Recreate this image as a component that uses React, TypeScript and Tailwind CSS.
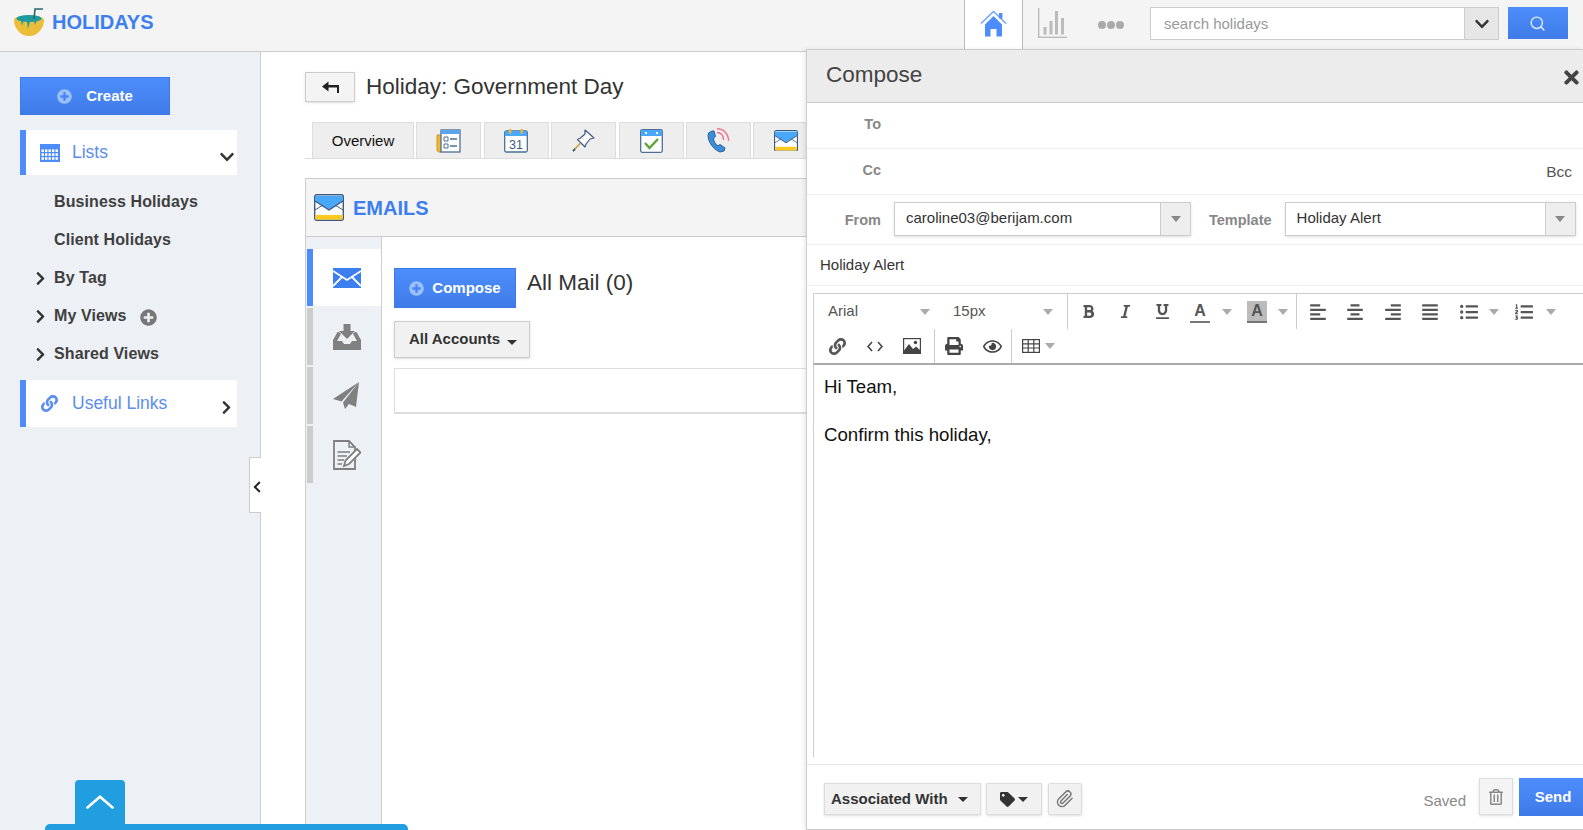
import {
  FaAlignCenter,
  FaAlignJustify,
  FaAlignLeft,
  FaAlignRight,
  FaBold,
  FaChevronDown,
  FaChevronLeft,
  FaChevronRight,
  FaItalic,
  FaLink,
  FaListOl,
  FaListUl,
  FaPlusCircle,
  FaPrint,
  FaRegEye,
  FaRegTrashAlt,
  FaTag,
  FaTimes,
  FaUnderline,
} from 'react-icons/fa';
import { FiPaperclip, FiSearch } from 'react-icons/fi';

function Caret({ color = 'border-t-[#aaa]' }: { color?: string }) {
  return <span className={`h-0 w-0 border-x-[5px] border-t-[6px] border-x-transparent ${color}`} />;
}

function BlackCaret() {
  return <span className="h-0 w-0 border-x-[5px] border-t-[5px] border-x-transparent border-t-[#333]" />;
}

function CoconutLogo() {
  return (
    <svg width="30" height="28" viewBox="0 0 30 28">
      <path d="M0 12 C0 6 30 6 30 12 C30 20 24 28 15 28 C6 28 0 20 0 12 Z" fill="#ebbd38" />
      <ellipse cx="15" cy="10.5" rx="12.5" ry="3.6" fill="#1f9aa0" />
      <path d="M7 12 L8 18 L9.5 13 Z M13 13 L14 21 L16 13 Z M20 13 L21 17 L23 12 Z" fill="#1f9aa0" />
      <path d="M20 11 L21 1 L29 1" fill="none" stroke="#24686c" strokeWidth="1.6" />
    </svg>
  );
}

function MailColor({ size = 30 }: { size?: number }) {
  return (
    <svg width={size} height={size * 0.9} viewBox="0 0 30 27">
      <rect x="0.7" y="0.7" width="28.6" height="25.6" rx="2" fill="#fff" stroke="#3d5a80" strokeWidth="1.4" />
      <path d="M1 2 H29 V7 L15 16 L1 7 Z" fill="#4aa8fb" />
      <path d="M1 7 L15 16 L29 7" fill="none" stroke="#3d5a80" strokeWidth="1.2" />
      <path d="M1 16 L9 11 M29 16 L21 11" stroke="#3d5a80" strokeWidth="1" />
      <rect x="1.5" y="21" width="27" height="4.6" fill="#fdc91e" />
    </svg>
  );
}

function MailTab() {
  return <MailColor size={24} />;
}

function NewsIcon() {
  return (
    <svg width="25" height="24" viewBox="0 0 25 24">
      <path d="M1 6 H6 V23 H3 C2 23 1 22 1 21 Z" fill="#f2b632" stroke="#c9952a" />
      <rect x="5" y="1" width="19" height="22" fill="#fff" stroke="#4d6f96" strokeWidth="1.3" />
      <rect x="5" y="1" width="19" height="4" fill="#5aa5ea" />
      <path d="M8 8 H12 V12 H8 Z M8 15 H12 V19 H8 Z" fill="none" stroke="#4d6f96" />
      <path d="M14 10 H21 M14 17 H21" stroke="#4d6f96" strokeWidth="1.4" />
    </svg>
  );
}

function CalIcon() {
  return (
    <svg width="24" height="25" viewBox="0 0 24 25">
      <rect x="0.7" y="3" width="22.6" height="21" rx="1.5" fill="#fff" stroke="#4d6f96" strokeWidth="1.3" />
      <rect x="1" y="3" width="22" height="5" fill="#4aa8fb" />
      <rect x="5" y="0.7" width="2.4" height="5" rx="1" fill="#e9b93c" />
      <rect x="16.5" y="0.7" width="2.4" height="5" rx="1" fill="#e9b93c" />
      <text x="12" y="21" textAnchor="middle" fontSize="12.5" fill="#3d5a80" fontFamily="Liberation Sans, sans-serif">31</text>
    </svg>
  );
}

function PinIcon() {
  return (
    <svg width="23" height="23" viewBox="0 0 23 23">
      <path d="M13 1 L22 9 L18 10 L14 15 L13 18 L5.5 10.5 L8.5 9 L13 5 Z" fill="#fff" stroke="#3d5a80" strokeWidth="1.2" strokeLinejoin="round" />
      <path d="M8 14.5 L1 22" stroke="#c9a24a" strokeWidth="1.8" />
      <path d="M3 20 L1 22" stroke="#3d5a80" strokeWidth="1.8" />
    </svg>
  );
}

function CheckCal() {
  return (
    <svg width="23" height="24" viewBox="0 0 23 24">
      <rect x="0.7" y="0.7" width="21.6" height="22.6" rx="1.5" fill="#fff" stroke="#4d6f96" strokeWidth="1.3" />
      <rect x="1" y="1" width="21" height="6" fill="#4aa8fb" />
      <rect x="5" y="3" width="2" height="2" fill="#fff" />
      <rect x="16" y="3" width="2" height="2" fill="#fff" />
      <path d="M5 14 L9.5 19 L18 10" fill="none" stroke="#5aa637" strokeWidth="2.4" />
    </svg>
  );
}

function PhoneIcon() {
  return (
    <svg width="24" height="25" viewBox="0 0 24 25">
      <path d="M6 3 L2.5 5 C0.5 11 6 21 14 24 L18 23 L19 20 L14 16.5 L12 18 C9 16 7.5 13 7.5 10 L9.5 8.5 L8 3 Z" fill="#3a8fdc" stroke="#2c5f92" strokeWidth="1" strokeLinejoin="round" />
      <path d="M11 4.5 C15 4.5 17.5 7.5 17.5 12" fill="none" stroke="#f2708a" strokeWidth="1.4" />
      <path d="M11 0.8 C18 0.8 22.5 6 22.5 13" fill="none" stroke="#f2708a" strokeWidth="1.4" />
    </svg>
  );
}

function InboxIcon() {
  return (
    <svg width="28" height="26" viewBox="0 0 28 26" fill="#808080">
      <path d="M10.5 0 H17.5 V7 H22 L14 15 L6 7 H10.5 Z" />
      <path d="M4.5 8 H6 L8 10 L4 17 H9 L11 20 H17 L19 17 H24 L20 10 L22 8 H23.5 L28 16 V26 H0 V16 Z" />
    </svg>
  );
}

function SendIcon() {
  return (
    <svg width="27" height="27" viewBox="0 0 27 27" fill="#808080">
      <path d="M26 0 L0 17 L8.5 19.5 Z" />
      <path d="M26 0 L10 20.5 L12 27 L16 22 L23 25 Z" />
    </svg>
  );
}

function DraftIcon() {
  return (
    <svg width="28" height="30" viewBox="0 0 28 30">
      <path d="M1 1 H16 L22 7 V29 H1 Z" fill="none" stroke="#808080" strokeWidth="1.8" />
      <path d="M16 1 V7 H22" fill="none" stroke="#808080" strokeWidth="1.5" />
      <path d="M4.5 12 H17 M4.5 16 H14 M4.5 20 H11 M4.5 24 H9" stroke="#808080" strokeWidth="1.6" />
      <path d="M24 9 L27.5 12.5 L16 24 L11 26 L12.5 20.5 Z" fill="#fff" stroke="#808080" strokeWidth="1.8" />
    </svg>
  );
}

function BackArrow() {
  return (
    <svg width="17" height="12" viewBox="0 0 17 12">
      <path d="M6.5 0.5 V4 H17 V12 H15 V6.5 H6.5 V10.5 L0 5.5 Z" fill="#222" />
    </svg>
  );
}

function HomeIcon() {
  return (
    <svg width="27" height="27" viewBox="0 0 27 27" fill="#4d8dfb">
      <path d="M1 13.5 L13.5 1.5 L26 13.5" fill="none" stroke="#6ea3fb" strokeWidth="1.4" />
      <rect x="19" y="3" width="3.4" height="5.5" />
      <path d="M5 14.5 L13.5 6 L22 14.5 V26.5 H16.5 V19 H10.5 V26.5 H5 Z" />
    </svg>
  );
}

function ChartIcon() {
  return (
    <svg width="29" height="30" viewBox="0 0 29 30" fill="#bbb">
      <rect x="0" y="0" width="1.4" height="30" />
      <rect x="0" y="28.6" width="29" height="1.4" />
      <rect x="5.5" y="19" width="3" height="7.5" />
      <rect x="11.5" y="13" width="3" height="13.5" />
      <rect x="17" y="3" width="3" height="23.5" />
      <rect x="23" y="10" width="3" height="16.5" />
    </svg>
  );
}

function CodeIcon() {
  return (
    <svg width="16" height="11" viewBox="0 0 16 11" fill="none" stroke="#444" strokeWidth="1.6">
      <path d="M5 1 L1 5.5 L5 10 M11 1 L15 5.5 L11 10" />
    </svg>
  );
}

function ImageIcon() {
  return (
    <svg width="18" height="16" viewBox="0 0 18 16">
      <rect x="0.6" y="0.6" width="16.8" height="14.8" fill="#fff" stroke="#444" strokeWidth="1.2" />
      <circle cx="12.5" cy="4.5" r="1.7" fill="#444" />
      <path d="M1 15 V12.5 L6 6 L10 11 L13 8.5 L17 12 V15 Z" fill="#444" />
    </svg>
  );
}

function CalendarGrid({ color, w, h }: { color: string; w: number; h: number }) {
  const cols = [1, 2, 3, 4];
  const rows = [1, 2, 3];
  return (
    <svg width={w} height={h} viewBox="0 0 20 18">
      <rect x="0" y="0" width="20" height="18" fill={color} />
      {rows.map((r) =>
        [0, ...cols].map((c) => <rect key={`${r}-${c}`} x={1.5 + c * 3.5} y={1.5 + r * 3.9} width="2.4" height="2.6" fill="#fff" />),
      )}
    </svg>
  );
}

function TableIcon() {
  return (
    <svg width="18" height="14" viewBox="0 0 18 14" fill="none" stroke="#444" strokeWidth="1.2">
      <rect x="0.6" y="0.6" width="16.8" height="12.8" />
      <path d="M0.6 4.8 H17.4 M0.6 9 H17.4 M6.2 0.6 V13.4 M11.8 0.6 V13.4" />
    </svg>
  );
}

function TopBar() {
  return (
    <header className="flex h-[52px] shrink-0 border-b border-[#ccc] bg-[#f4f4f4]">
      <div className="flex items-center pb-[8px] pl-[14px]">
        <CoconutLogo />
        <span className="ml-[8px] text-[20px] font-bold text-[#3d7ff0]">HOLIDAYS</span>
      </div>
      <div className="ml-[auto] flex">
        <div className="flex h-[49px] w-[59px] items-center justify-center border-x border-[#bbb] bg-white pb-[3px]">
          <HomeIcon />
        </div>
        <div className="ml-[15px] mt-[8px]">
          <ChartIcon />
        </div>
        <div className="ml-[31px] mt-[21px] flex h-[10px] gap-[1px]">
          <span className="h-[8px] w-[8px] rounded-full bg-[#aaa]" />
          <span className="h-[8px] w-[8px] rounded-full bg-[#aaa]" />
          <span className="h-[8px] w-[8px] rounded-full bg-[#aaa]" />
        </div>
        <div className="ml-[26px] mt-[7px] flex h-[33px] w-[349px] border border-[#ccc] bg-white">
          <div className="flex flex-1 items-center pl-[13px] pt-[1px] text-[15px] text-[#999]">search holidays</div>
          <div className="flex w-[34px] items-center justify-center border-l border-[#ccc] bg-[#e6e6e6]">
            <FaChevronDown size={16} className="text-[#333]" />
          </div>
        </div>
        <div className="ml-[9px] mr-[15px] mt-[7px] flex h-[32px] w-[60px] items-center justify-center bg-gradient-to-b from-[#4d8efc] to-[#3f7be8]">
          <FiSearch size={17} className="mr-[2px] text-[#e0ebff]" />
        </div>
      </div>
    </header>
  );
}

function SideRow({ label, arrow, children }: { label: string; arrow?: boolean; children?: React.ReactNode }) {
  return (
    <div className="flex h-[38px] items-center text-[16px] font-bold tracking-[0.1px] text-[#3f3f3f]">
      <span className="flex w-[34px] justify-end pr-[6px]">{arrow && <FaChevronRight size={15} className="text-[#333]" />}</span>
      {label}
      {children}
    </div>
  );
}

function Sidebar() {
  return (
    <aside className="relative w-[261px] shrink-0 border-r border-[#ccc] bg-[#edf0f5] pl-[20px] pt-[25px]">
      <div className="flex h-[38px] w-[150px] items-center justify-center gap-[14px] border border-[#3c79ea] bg-gradient-to-b from-[#4d8efc] to-[#3f7be8] text-[15px] font-bold text-white">
        <FaPlusCircle size={15} className="text-[#9cc0fb]" />
        Create
      </div>
      <div className="mt-[15px] flex h-[45px] w-[217px] items-center border-l-[6px] border-[#4d8dfb] bg-white pl-[14px] text-[18px] text-[#5b8ef0]">
        <CalendarGrid color="#4d8dfb" w={20} h={18} />
        <span className="ml-[12px] text-[17.5px]">Lists</span>
        <FaChevronDown size={16} className="ml-[auto] mr-[2px] mt-[8px] text-[#333]" />
      </div>
      <div className="mt-[8px]">
        <SideRow label="Business Holidays" />
        <SideRow label="Client Holidays" />
        <SideRow label="By Tag" arrow />
        <SideRow label="My Views" arrow>
          <FaPlusCircle size={17} className="ml-[13px] mt-[2px] text-[#777]" />
        </SideRow>
        <SideRow label="Shared Views" arrow />
      </div>
      <div className="mt-[7px] flex h-[47px] w-[217px] items-center border-l-[6px] border-[#4d8dfb] bg-white pl-[15px] text-[17.5px] text-[#5b8ef0]">
        <FaLink size={17} className="text-[#5b8ef0]" />
        <span className="ml-[14px]">Useful Links</span>
        <FaChevronRight size={15} className="ml-[auto] mr-[3px] mt-[7px] text-[#333]" />
      </div>
      <div className="absolute right-[-1px] top-[405px] flex h-[56px] w-[12px] items-center justify-center border-y border-l border-[#ccc] bg-white pl-[3px] pt-[4px]">
        <FaChevronLeft size={14} className="text-[#222]" />
      </div>
    </aside>
  );
}

const detailTabs = [NewsIcon, CalIcon, PinIcon, CheckCal, PhoneIcon, MailTab];

function RailItem({ active, children }: { active?: boolean; children: React.ReactNode }) {
  return (
    <div className={`flex h-[57px] items-center border-l-[6px] ${active ? 'border-[#4d8dfb] bg-white' : 'border-[#ccc]'}`}>
      <span className="flex w-[67px] justify-center">{children}</span>
    </div>
  );
}

function MainArea() {
  return (
    <main className="flex min-w-0 flex-1 flex-col pl-[44px]">
      <div className="flex items-center pt-[20px]">
        <div className="flex h-[30px] w-[50px] items-center justify-center border border-[#ccc] bg-[#f4f4f4] shadow-sm">
          <BackArrow />
        </div>
        <h1 className="ml-[11px] text-[22.5px] leading-[30px] text-[#333]">Holiday: Government Day</h1>
      </div>
      <div className="mt-[20px] flex h-[37px] shrink-0 gap-[2.4px] border-b border-[#ddd] pl-[7px]">
        <div className="flex w-[102px] items-center justify-center border border-b-0 border-[#ddd] bg-[#eee] pt-[1px] text-[15px] text-[#111]">Overview</div>
        {detailTabs.map((Icon, i) => (
          <div key={i} className="flex w-[65px] items-center justify-center border border-b-0 border-[#ddd] bg-[#eee]">
            <Icon />
          </div>
        ))}
      </div>
      <section className="mt-[19px] flex flex-1 flex-col border-x border-t border-[#ccc]">
        <div className="flex h-[58px] shrink-0 items-center border-b border-[#ccc] bg-[#f4f4f4] pl-[8px]">
          <MailColor />
          <span className="ml-[9px] text-[20px] font-bold text-[#3d7ff0]">EMAILS</span>
        </div>
        <div className="flex flex-1">
          <div className="flex w-[76px] shrink-0 flex-col gap-[2px] border-r border-[#ccc] bg-[#edf0f5] pl-[1px] pt-[12px]">
            <RailItem active>
              <svg width="28" height="20" viewBox="0 0 28 20">
                <rect width="28" height="20" fill="#3d7ff0" />
                <path d="M0 3 L14 12 L28 3 M0 18 L9 9 M28 18 L19 9" fill="none" stroke="#fff" strokeWidth="1.8" />
              </svg>
            </RailItem>
            <RailItem>
              <InboxIcon />
            </RailItem>
            <RailItem>
              <SendIcon />
            </RailItem>
            <RailItem>
              <DraftIcon />
            </RailItem>
          </div>
          <div className="flex-1 pl-[12px] pt-[31px]">
            <div className="flex items-start">
              <div className="flex h-[40px] w-[122px] items-center justify-center gap-[8px] border border-[#3c79ea] bg-gradient-to-b from-[#4d8efc] to-[#3f7be8] text-[15px] font-bold text-white">
                <FaPlusCircle size={15} className="text-[#9cc0fb]" />
                Compose
              </div>
              <span className="ml-[11px] text-[22.5px] leading-[30px] text-[#333]">All Mail (0)</span>
            </div>
            <div className="mt-[13px] flex h-[37px] w-[136px] items-center gap-[7px] border border-[#ccc] bg-[#f1f1f1] pl-[14px] text-[15px] font-bold text-[#333] shadow-sm">
              All Accounts
              <span className="mt-[5px] flex">
                <BlackCaret />
              </span>
            </div>
            <div className="mt-[10px] h-[46px] border border-b-2 border-[#ddd]" />
          </div>
        </div>
      </section>
    </main>
  );
}

function FieldRow({ label, extra }: { label: string; extra?: string }) {
  return (
    <div className="flex h-[46px] shrink-0 items-center border-b border-[#eee]">
      <span className="w-[74px] pb-[1px] text-right text-[14.5px] font-bold text-[#888]">{label}</span>
      {extra && <span className="ml-[auto] mr-[11px] pt-[1px] text-[15.5px] text-[#555]">{extra}</span>}
    </div>
  );
}

function SelectBox({ value, width }: { value: string; width: string }) {
  return (
    <div className={`flex h-[34px] border border-[#ccc] bg-white shadow-sm ${width}`}>
      <span className="flex flex-1 items-center pl-[11px] text-[15px] text-[#333]">{value}</span>
      <span className="flex w-[30px] items-center justify-center border-l border-[#ccc] bg-[#eee]">
        <Caret color="border-t-[#888]" />
      </span>
    </div>
  );
}

function Tool({ children }: { children: React.ReactNode }) {
  return <span className="flex w-[37px] items-center justify-center text-[#555]">{children}</span>;
}

function AlignTool({ children }: { children: React.ReactNode }) {
  return <span className="flex w-[37.5px] items-center justify-center text-[#555]">{children}</span>;
}

function EditorToolbar() {
  return (
    <div className="ml-[6px] mt-[7px] shrink-0 border-y border-b-2 border-l border-y-[#ccc] border-b-[#aaa] border-l-[#ccc]">
      <div className="flex h-[35px]">
        <div className="flex w-[126px] items-center justify-between pl-[14px] pr-[10px] text-[15px] text-[#555]">
          Arial
          <Caret />
        </div>
        <div className="flex w-[128px] items-center justify-between border-r border-[#ccc] pl-[13px] pr-[14px] text-[15px] text-[#555]">
          15px
          <Caret />
        </div>
        <div className="flex pl-[2px]">
          <Tool>
            <FaBold size={15} />
          </Tool>
          <Tool>
            <FaItalic size={15} />
          </Tool>
          <Tool>
            <FaUnderline size={15} />
          </Tool>
        </div>
        <div className="flex w-[58px] items-center gap-[12px] pl-[9px]">
          <span className="w-[20px] border-b-2 border-[#777] text-center text-[16px] font-bold leading-[20px] text-[#555]">A</span>
          <Caret />
        </div>
        <div className="flex w-[58px] items-center gap-[11px] border-r border-[#ccc] pl-[8px]">
          <span className="w-[20px] border-b-2 border-[#777] bg-[#bbb] text-center text-[16px] font-bold leading-[20px] text-[#555]">A</span>
          <Caret />
        </div>
        <div className="flex pl-[2px]">
          <AlignTool>
            <FaAlignLeft size={18} />
          </AlignTool>
          <AlignTool>
            <FaAlignCenter size={18} />
          </AlignTool>
          <AlignTool>
            <FaAlignRight size={18} />
          </AlignTool>
          <AlignTool>
            <FaAlignJustify size={18} />
          </AlignTool>
        </div>
        <div className="ml-[11px] flex items-center gap-[11px] text-[#555]">
          <FaListUl size={18} />
          <Caret />
        </div>
        <div className="ml-[16px] flex items-center gap-[13px] text-[#555]">
          <FaListOl size={18} />
          <Caret />
        </div>
      </div>
      <div className="flex h-[34px] pl-[5px] text-[#444]">
        <Tool>
          <FaLink size={17} />
        </Tool>
        <Tool>
          <CodeIcon />
        </Tool>
        <span className="flex w-[42px] items-center justify-center border-r border-[#ccc] pr-[3px]">
          <ImageIcon />
        </span>
        <span className="flex w-[38px] items-center justify-center text-[#444]">
          <FaPrint size={18} />
        </span>
        <span className="flex w-[39px] items-center justify-center border-r border-[#ccc] text-[#444]">
          <FaRegEye size={19} />
        </span>
        <span className="ml-[10px] flex items-center gap-[5px]">
          <TableIcon />
          <Caret />
        </span>
      </div>
    </div>
  );
}

function ComposePanel() {
  return (
    <div className="absolute left-[806px] right-0 top-[49px] flex h-[781px] flex-col border-b border-l border-[#ccc] bg-white shadow-[-2px_0_4px_rgba(0,0,0,0.08)]">
      <div className="flex h-[54px] shrink-0 items-center justify-between border-b border-t border-[#ccc] bg-[#ececec] pl-[19px] pr-[1px]">
        <span className="pb-[2px] text-[22.5px] text-[#444]">Compose</span>
        <FaTimes size={21} className="mt-[3px] text-[#444]" />
      </div>
      <FieldRow label="To" />
      <FieldRow label="Cc" extra="Bcc" />
      <div className="flex h-[50px] shrink-0 items-center border-b border-[#eee] pb-[2px]">
        <span className="w-[74px] pt-[5px] text-right text-[14.5px] font-bold text-[#888]">From</span>
        <div className="ml-[13px]">
          <SelectBox value="caroline03@berijam.com" width="w-[297px]" />
        </div>
        <span className="ml-[18px] pt-[5px] text-[14.5px] font-bold text-[#888]">Template</span>
        <div className="ml-[13px]">
          <SelectBox value="Holiday Alert" width="w-[291px]" />
        </div>
      </div>
      <div className="flex h-[41px] shrink-0 items-center border-b border-[#eee] pl-[13px] text-[15px] text-[#333]">Holiday Alert</div>
      <EditorToolbar />
      <div className="ml-[6px] flex-1 border-l border-[#ccc] pl-[10px] pt-[10px] text-[18.67px] leading-[24px] text-[#111]">
        <p>Hi Team,</p>
        <p className="mt-[24px]">Confirm this holiday,</p>
      </div>
      <div className="flex h-[72px] shrink-0 border-t-[7px] border-white">
        <div className="flex flex-1 border-t border-[#e6e6e6] pl-[17px]">
          <div className="mt-[18px] flex h-[32px] w-[157px] items-center gap-[10px] border border-[#ddd] bg-[#f1f1f1] pl-[6px] text-[15px] font-bold text-[#333] shadow-sm">
            Associated With
            <BlackCaret />
          </div>
          <div className="ml-[5px] mt-[18px] flex h-[32px] w-[56px] items-center justify-center gap-[3px] border border-[#ddd] bg-[#f1f1f1] text-[#333] shadow-sm">
            <FaTag size={15} />
            <BlackCaret />
          </div>
          <div className="ml-[6px] mt-[18px] flex h-[32px] w-[34px] items-center justify-center rounded-[2px] border border-[#ddd] bg-[#f1f1f1] text-[#777] shadow-sm">
            <FiPaperclip size={18} />
          </div>
          <span className="ml-[auto] mt-[25px] text-[15px] text-[#888]">Saved</span>
          <div className="ml-[13px] mt-[13px] flex h-[37px] w-[34px] items-center justify-center border border-[#ddd] bg-[#f4f4f4] text-[#888] shadow-sm">
            <FaRegTrashAlt size={16} />
          </div>
          <div className="ml-[6px] mt-[13px] flex h-[38px] w-[64px] items-center justify-center bg-gradient-to-b from-[#4d8efc] to-[#3f7be8] pl-[4px] text-[15px] font-bold text-white">
            Send
          </div>
        </div>
      </div>
    </div>
  );
}

export default function App() {
  return (
    <div className="relative flex h-[830px] flex-col overflow-hidden bg-white font-['Liberation_Sans',Arial,sans-serif]">
      <TopBar />
      <div className="flex min-h-0 flex-1">
        <Sidebar />
        <MainArea />
      </div>
      <ComposePanel />
      <div className="absolute bottom-[6px] left-[75px] flex h-[44px] w-[50px] items-center justify-center rounded-t-[4px] bg-[#209ee0]">
        <svg width="28" height="14" viewBox="0 0 28 14" fill="none" stroke="#fff" strokeWidth="2.6" strokeLinecap="round">
          <path d="M1.5 12.5 L14 1.8 L26.5 12.5" />
        </svg>
      </div>
      <div className="absolute bottom-0 left-[45px] h-[6px] w-[363px] rounded-t-[5px] bg-[#209ee0]" />
    </div>
  );
}
